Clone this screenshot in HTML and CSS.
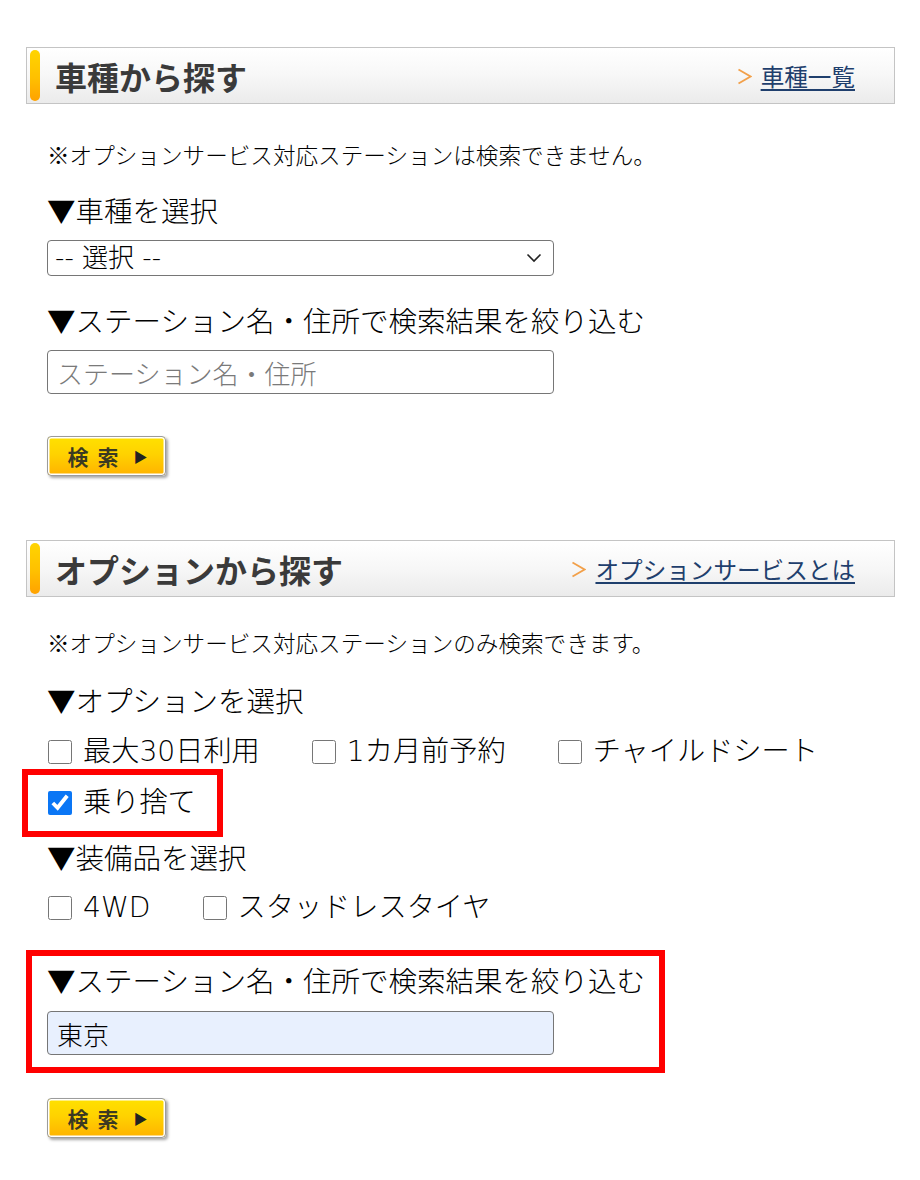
FILE: index.html
```html
<!DOCTYPE html>
<html lang="ja">
<head>
<meta charset="utf-8">
<title>検索</title>
<link rel="stylesheet" href="styles.css">
</head>
<body>
<div class="page">
  <section class="block">
    <div class="sec-head">
      <span class="accent"></span>
      <h2 class="sec-title">車種から探す</h2>
      <a class="sec-link" href="#"><svg class="chev" viewBox="0 0 15 17" width="15" height="17"><polyline points="1.5,1.5 13.5,8.5 1.5,15.5" fill="none" stroke="#f2a04a" stroke-width="1.8" stroke-linejoin="miter"/></svg><span class="link-text">車種一覧</span></a>
    </div>
    <div class="content">
      <p class="note note-1">※オプションサービス対応ステーションは検索できません。</p>
      <p class="label label-1">▼車種を選択</p>
      <div class="select-wrap">
        <select class="select"><option>-- 選択 --</option></select>
        <svg class="select-arrow" viewBox="0 0 16 10" width="16" height="10"><polyline points="1.5,1.5 8,8 14.5,1.5" fill="none" stroke="#222" stroke-width="1.6"/></svg>
      </div>
      <p class="label label-2">▼ステーション名・住所で検索結果を絞り込む</p>
      <input class="text-input" type="text" placeholder="ステーション名・住所">
      <button class="search-btn btn-1" type="button"><span class="btn-text">検索</span><span class="tri">▶</span></button>
    </div>
  </section>

  <section class="block block-2">
    <div class="sec-head">
      <span class="accent"></span>
      <h2 class="sec-title">オプションから探す</h2>
      <a class="sec-link" href="#"><svg class="chev" viewBox="0 0 15 17" width="15" height="17"><polyline points="1.5,1.5 13.5,8.5 1.5,15.5" fill="none" stroke="#f2a04a" stroke-width="1.8" stroke-linejoin="miter"/></svg><span class="link-text">オプションサービスとは</span></a>
    </div>
    <div class="content">
      <p class="note note-2">※オプションサービス対応ステーションのみ検索できます。</p>
      <p class="label label-opt">▼オプションを選択</p>
      <div class="checks checks-1">
        <label class="check"><input type="checkbox"><span>最大30日利用</span></label>
        <label class="check"><input type="checkbox"><span>1カ月前予約</span></label>
        <label class="check"><input type="checkbox"><span>チャイルドシート</span></label>
        <label class="check marked"><input type="checkbox" checked><span>乗り捨て</span></label>
      </div>
      <p class="label label-equip">▼装備品を選択</p>
      <div class="checks checks-2">
        <label class="check"><input type="checkbox"><span>4WD</span></label>
        <label class="check"><input type="checkbox"><span>スタッドレスタイヤ</span></label>
      </div>
      <div class="red-box">
        <p class="label label-3">▼ステーション名・住所で検索結果を絞り込む</p>
        <input class="text-input filled" type="text" value="東京">
      </div>
      <button class="search-btn btn-2" type="button"><span class="btn-text">検索</span><span class="tri">▶</span></button>
    </div>
  </section>
</div>
</body>
</html>
```

FILE: styles.css
```css
* {
  box-sizing: border-box;
}

html, body {
  margin: 0;
  padding: 0;
  background: #ffffff;
}

body {
  font-family: "Noto Sans CJK JP", "Noto Sans", sans-serif;
  font-weight: 300;
  color: #000000;
}

.page {
  padding: 47px 25px 40px 26px;
}

.block-2 {
  margin-top: 64px;
}

.sec-head {
  display: flex;
  align-items: center;
  height: 57px;
  border: 1px solid #c4c4c4;
  background: linear-gradient(#ffffff 0%, #f7f7f7 50%, #ebebeb 100%);
}

.accent {
  width: 10px;
  height: 51px;
  margin-left: 3px;
  border-radius: 5px;
  background: linear-gradient(#ffd400 0%, #ffc000 55%, #ffa200 100%);
}

.sec-title {
  margin: 0 0 0 15px;
  font-size: 32px;
  font-weight: 700;
  line-height: 40px;
  color: #3a3a3a;
}

.sec-link {
  margin-left: auto;
  margin-right: 39px;
  display: flex;
  align-items: center;
  gap: 9px;
  text-decoration: none;
}

.chev {
  display: block;
  margin-top: 1px;
}

.link-text {
  font-size: 23.6px;
  font-weight: 400;
  line-height: 32px;
  color: #1f3f6d;
  text-decoration: underline;
  text-decoration-thickness: 2px;
  text-underline-offset: 3px;
}

.content {
  padding-left: 21px;
}

.note {
  margin: 0;
  font-size: 22.6px;
  line-height: 34px;
}

.note-1 {
  margin-top: 34px;
}

.note-2 {
  margin-top: 29px;
}

.label {
  margin: 0;
  font-size: 28.5px;
  line-height: 40px;
  white-space: nowrap;
}

.label-1 {
  margin-top: 18px;
}

.label-2 {
  margin-top: 24px;
}

.label-opt {
  margin-top: 20px;
}

.label-equip {
  margin-top: 14px;
}

.select-wrap {
  position: relative;
  width: 507px;
  margin-top: 10px;
}

.select {
  display: block;
  width: 507px;
  height: 36px;
  padding: 0 40px 0 7px;
  appearance: none;
  -webkit-appearance: none;
  border: 1.5px solid #767676;
  border-radius: 4px;
  background: #ffffff;
  font-family: "DejaVu Sans", "Noto Sans CJK JP", sans-serif;
  font-weight: 300;
  font-size: 26px;
  line-height: 32px;
  color: #000000;
}

.select-arrow {
  position: absolute;
  right: 12px;
  top: 13px;
  pointer-events: none;
}

.text-input {
  display: block;
  width: 507px;
  height: 44px;
  margin-top: 10px;
  padding: 0 9px;
  border: 1.5px solid #767676;
  border-radius: 4px;
  background: #ffffff;
  font-family: inherit;
  font-weight: 300;
  font-size: 26px;
  color: #000000;
  outline: none;
}

.text-input::placeholder {
  color: #7a7a7a;
}

.text-input.filled {
  background: #e8f0fe;
}

.search-btn {
  display: flex;
  align-items: center;
  justify-content: center;
  width: 119px;
  height: 40px;
  padding: 0 0 0 2px;
  border: 1px solid #9c9c9c;
  border-radius: 4px;
  background: linear-gradient(#ffe100 0%, #ffd200 45%, #ffb300 100%);
  box-shadow: inset 0 0 0 1.5px #ffffff, 2px 2px 3px rgba(0, 0, 0, 0.35);
  font-family: inherit;
  cursor: pointer;
}

.btn-1 {
  margin-top: 42px;
}

.btn-2 {
  margin-top: 25px;
}

.btn-text {
  font-size: 21px;
  font-weight: 700;
  letter-spacing: 9px;
  color: #3b3a22;
  line-height: 1;
}

.tri {
  font-size: 14px;
  color: #222222;
  margin-left: 6px;
  line-height: 1;
}

.checks {
  display: flex;
  flex-wrap: wrap;
  column-gap: 51px;
  row-gap: 11px;
}

.checks-1 {
  margin-top: 12px;
}

.checks-2 {
  margin-top: 11px;
}

.check {
  position: relative;
  display: flex;
  align-items: center;
  gap: 11px;
  height: 40px;
  font-family: "DejaVu Sans", "Noto Sans CJK JP", sans-serif;
  font-weight: 300;
  font-size: 28.2px;
  line-height: 40px;
}

.check input {
  width: 24px;
  height: 24px;
  margin: 0 0 0 1px;
  accent-color: #0a76f5;
}

.marked::after {
  content: "";
  position: absolute;
  top: -14px;
  bottom: -14px;
  left: -25px;
  right: -27px;
  border: 6px solid #ff0000;
  pointer-events: none;
}

.red-box {
  width: 639px;
  margin: 22px 0 0 -21px;
  padding: 4px 15px 12px 15px;
  border: 6px solid #ff0000;
}

.label-3 {
  margin-top: 0;
}

.red-box .text-input {
  margin-top: 11px;
}
```
